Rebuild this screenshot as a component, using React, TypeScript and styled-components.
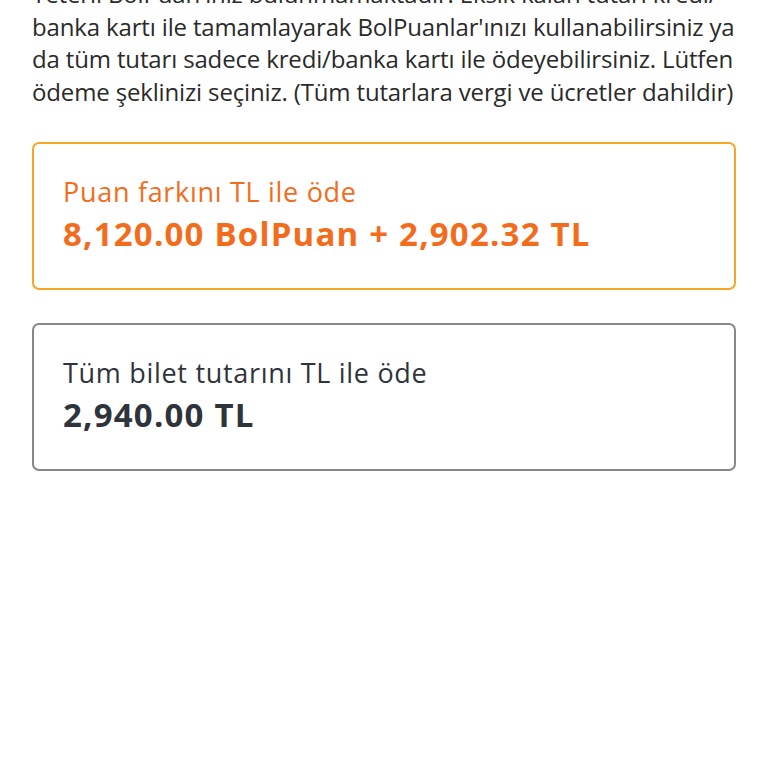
import React from 'react';
import styled, { createGlobalStyle } from 'styled-components';

const GlobalStyle = createGlobalStyle`
  html, body {
    margin: 0;
    padding: 0;
    background: #ffffff;
  }
  body {
    font-family: 'Open Sans', 'Noto Sans', sans-serif;
    -webkit-font-smoothing: antialiased;
  }
`;

type Option = {
  id: string;
  title: string;
  amount: string;
  selected: boolean;
};

const options: Option[] = [
  {
    id: 'points-plus-cash',
    title: 'Puan farkını TL ile öde',
    amount: '8,120.00 BolPuan + 2,902.32 TL',
    selected: true,
  },
  {
    id: 'cash',
    title: 'Tüm bilet tutarını TL ile öde',
    amount: '2,940.00 TL',
    selected: false,
  },
];

const App: React.FC = () => {
  return (
    <>
      <GlobalStyle />
      <Page>
        <Description>
          Yeterli BolPuan'ınız bulunmamaktadır. Eksik kalan tutarı kredi/ banka kartı ile
          tamamlayarak BolPuanlar'ınızı kullanabilirsiniz ya da tüm tutarı sadece kredi/banka
          kartı ile ödeyebilirsiniz. Lütfen ödeme şeklinizi seçiniz. (Tüm tutarlara vergi ve
          ücretler dahildir)
        </Description>
        <OptionList>
          {options.map(option => (
            <OptionCard key={option.id} $selected={option.selected}>
              <OptionTitle $selected={option.selected}>{option.title}</OptionTitle>
              <OptionAmount $selected={option.selected}>{option.amount}</OptionAmount>
            </OptionCard>
          ))}
        </OptionList>
      </Page>
    </>
  );
};

export default App;

// the page is shown scrolled a little, so the first line sits above the top edge
const Page = styled.div`
  display: flex;
  flex-direction: column;
  gap: 34px;
  padding: 0 32px;
  margin-top: -22px;
`;

const Description = styled.p`
  margin: 0;
  font-size: 24px;
  line-height: 32.5px;
  letter-spacing: -0.15px;
  color: #2a2a2a;
`;

const OptionList = styled.div`
  display: flex;
  flex-direction: column;
  gap: 33px;
`;

const OptionCard = styled.div<{ $selected: boolean }>`
  display: flex;
  flex-direction: column;
  gap: 4px;
  height: 148px;
  box-sizing: border-box;
  padding: 31px 29px 0;
  border: 2px solid ${p => (p.$selected ? '#f5a623' : '#85878c')};
  border-radius: 7px;
  background: #ffffff;
`;

const OptionTitle = styled.span<{ $selected: boolean }>`
  font-size: 27px;
  line-height: 33px;
  letter-spacing: 0.7px;
  white-space: nowrap;
  color: ${p => (p.$selected ? '#f36c1c' : '#2f343b')};
`;

const OptionAmount = styled.span<{ $selected: boolean }>`
  font-size: 33px;
  font-weight: 700;
  line-height: 44px;
  letter-spacing: 1.2px;
  white-space: nowrap;
  color: ${p => (p.$selected ? '#f36c1c' : '#2f343b')};
`;
